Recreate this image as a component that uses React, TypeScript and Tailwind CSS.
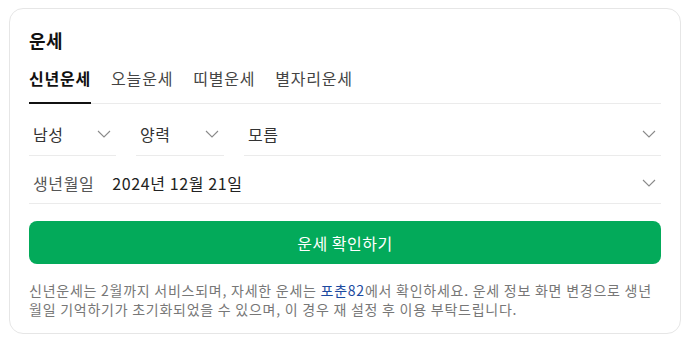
import React from "react";

const font = { fontFamily: '"Noto Sans CJK KR", "Noto Sans", sans-serif' };

function Chevron() {
  return (
    <svg width="14" height="8" viewBox="0 0 14 8" fill="none" className="shrink-0">
      <path d="M1 1l6 6 6-6" stroke="#8a8a8a" strokeWidth="1.1" />
    </svg>
  );
}

function Select({ label, className }: { label: string; className: string }) {
  return (
    <div className={`flex items-center justify-between h-[52px] pt-2 border-b border-[#ebebeb] pl-1 pr-[5px] ${className}`}>
      <span className="text-[16px] tracking-[0.5px] text-[#333]">{label}</span>
      <Chevron />
    </div>
  );
}

export default function App() {
  const tabs = ["신년운세", "오늘운세", "띠별운세", "별자리운세"];
  return (
    <div className="w-[692px] h-[346px] bg-white pt-2 pl-[9px]" style={font}>
      <div className="w-[672px] h-[326px] border border-[#e6e6e6] rounded-[14px] px-[19px] pt-[17px]">
        <h2 className="text-[18px] tracking-[0.5px] font-bold text-[#111] leading-[28px]">운세</h2>
        <div className="flex gap-[20px] border-b border-[#ebebeb] mt-[13px]">
          {tabs.map((t, i) => (
            <div
              key={t}
              className={`text-[16px] tracking-[0.8px] leading-[22px] pb-[13px] -mb-px ${
                i === 0 ? "font-bold text-[#111] border-b-2 border-[#111]" : "text-[#444] border-b-2 border-transparent"
              }`}
            >
              {t}
            </div>
          ))}
        </div>
        <div className="flex gap-5">
          <Select label="남성" className="w-[87px]" />
          <Select label="양력" className="w-[88px]" />
          <Select label="모름" className="flex-1" />
        </div>
        <div className="flex items-center justify-between h-[48px] pt-[6px] border-b border-[#ebebeb] pl-1 pr-[5px]">
          <div className="flex items-center gap-[18px] text-[16px] tracking-[0.6px]">
            <span className="text-[#555]">생년월일</span>
            <span className="text-[#222]">2024년 12월 21일</span>
          </div>
          <Chevron />
        </div>
        <button className="mt-[17px] w-full h-[43px] rounded-lg bg-[#03aa5a] text-white text-[16px] tracking-[0.5px]">운세 확인하기</button>
        <p className="mt-[17px] text-[14px] tracking-[0.75px] leading-[19px] text-[#777]">
          신년운세는 2월까지 서비스되며, 자세한 운세는 <span className="text-[#1c4aa0]">포춘82</span>에서 확인하세요. 운세 정보 화면 변경으로 생년월일 기억하기가 초기화되었을 수 있으며, 이 경우 재 설정 후 이용 부탁드립니다.
        </p>
      </div>
    </div>
  );
}
